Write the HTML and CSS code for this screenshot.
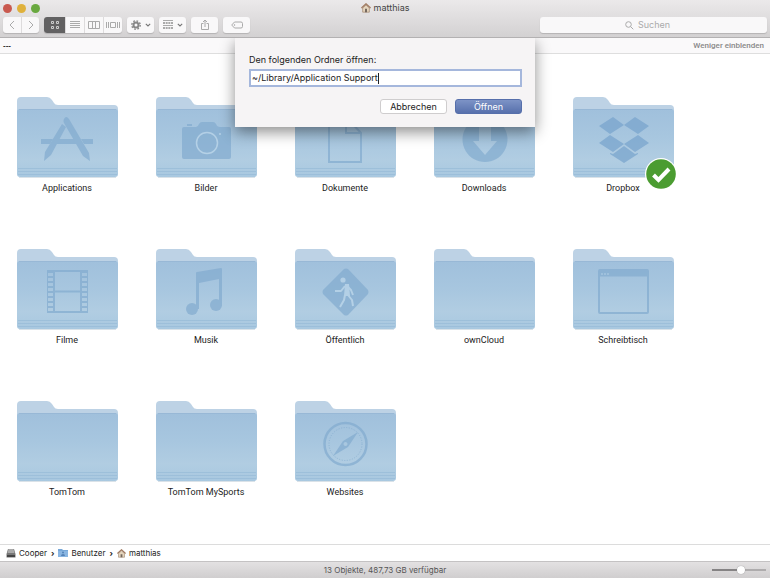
FILE: index.html
```html
<!DOCTYPE html>
<html lang="de">
<head>
<meta charset="utf-8">
<title>matthias</title>
<link rel="stylesheet" href="styles.css">
</head>
<body>
<svg class="defs" aria-hidden="true">
  <defs>
    <linearGradient id="front" x1="0" y1="0" x2="0" y2="1">
      <stop offset="0" stop-color="#a0c0dc"/>
      <stop offset="0.4" stop-color="#a7c6df"/>
      <stop offset="0.75" stop-color="#b1cde2"/>
      <stop offset="1" stop-color="#a8c8e0"/>
    </linearGradient>
    <symbol id="folder" viewBox="0 0 102 82">
      <path d="M0 77V4q0-4 4-4h26q3 0 5 3l2 3q1 2 4 2h56q4 0 4 4v65z" fill="#bdd2e5"/>
      <path d="M0 15q0-3 3-3h95q3 0 3 3v62q0 3-3 3H3q-3 0-3-3z" fill="url(#front)"/>
      <path d="M2 12.500h97" stroke="#98b8d6"/>
      <path d="M1 71.500h99M1 74.500h99M1 77.500h99" stroke="#94b9d7" opacity=".6"/>
      <path d="M2 80.500h97" stroke="#a5b7c6" opacity=".4"/>
    </symbol>
    <symbol id="home" viewBox="0 0 12 12">
      <path d="M2 6v5h8V6L6 2.500z" fill="#e5d5bd" stroke="#94765c" stroke-width=".7"/>
      <path d="M.5 6L6 1l5.500 5" fill="none" stroke="#a07a60" stroke-width="1.600"/>
      <path d="M4.800 7h2.400v4H4.800z" fill="#76695f"/>
    </symbol>
    <symbol id="chevron" viewBox="0 0 6 4"><path d="M.8.8L3 3 5.200.8" fill="none" stroke="#777" stroke-width="1.100"/></symbol>
  </defs>
</svg>
<div class="window">
  <header class="toolbar">
    <div class="titlebar">
      <div class="lights">
        <button class="light red" aria-label="Schließen"></button>
        <button class="light yellow" aria-label="Minimieren"></button>
        <button class="light green" aria-label="Vollbild"></button>
      </div>
      <h1 class="title"><svg width="10" height="10"><use href="#home"/></svg>matthias</h1>
    </div>
    <div class="tools">
      <div class="group nav">
        <button aria-label="Zurück"><svg width="8" height="10" viewBox="0 0 8 10"><path d="M6 1L2 5l4 4"/></svg></button>
        <button aria-label="Vorwärts"><svg width="8" height="10" viewBox="0 0 8 10"><path d="M2 1l4 4-4 4"/></svg></button>
      </div>
      <div class="group views">
        <button class="active" aria-label="Symbole"><svg width="10" height="10" viewBox="0 0 10 10"><path d="M1.500 1.500h2v2h-2zM6.500 1.500h2v2h-2zM1.500 6.500h2v2h-2zM6.500 6.500h2v2h-2z"/></svg></button>
        <button aria-label="Liste"><svg width="10" height="10" viewBox="0 0 10 10"><path d="M0 1.500h10M0 3.500h10M0 5.500h10M0 7.500h10"/></svg></button>
        <button aria-label="Spalten"><svg width="12" height="10" viewBox="0 0 12 10"><path d="M.5 1.500h11v7H.5zM4.500 1v8M7.500 1v8"/></svg></button>
        <button aria-label="Cover Flow"><svg width="14" height="10" viewBox="0 0 14 10"><path d="M4.500 2.500h5v5h-5zM.5 2v6M2.500 2v6M11.500 2v6M13.500 2v6"/></svg></button>
      </div>
      <button class="tool" aria-label="Aktionen">
        <svg width="10" height="10" viewBox="0 0 10 10"><circle class="gear" cx="5" cy="5" r="2.500" stroke-width="2"/><circle class="gear" cx="5" cy="5" r="4.200" stroke-width="1.400" stroke-dasharray="1.700 1.600"/></svg>
        <svg width="6" height="4"><use href="#chevron"/></svg>
      </button>
      <button class="tool" aria-label="Ausrichten">
        <svg width="10" height="10" viewBox="0 0 10 10"><path d="M0 .5h10M0 5.500h10"/><path d="M0 3h10M0 8h10" stroke-width="2" stroke-dasharray="2 .667"/></svg>
        <svg width="6" height="4"><use href="#chevron"/></svg>
      </button>
      <button class="tool" aria-label="Teilen"><svg width="10" height="12" viewBox="0 0 10 12"><path d="M3.500 4.500h-2v6h7v-6h-2M5 8V1M3 3l2-2 2 2"/></svg></button>
      <button class="tool" aria-label="Tags"><svg width="12" height="8" viewBox="0 0 12 8"><path d="M3.500 1H10q1.500 0 1.500 1.500v3Q11.500 7 10 7H3.500L.7 4z"/><circle cx="3.500" cy="4" r=".4"/></svg></button>
      <label class="search">
        <svg width="9" height="9" viewBox="0 0 9 9"><circle cx="3.500" cy="3.500" r="2.800"/><path d="M5.500 5.500L8.300 8.300"/></svg>
        <input type="text" placeholder="Suchen" aria-label="Suchen">
      </label>
    </div>
  </header>

  <div class="strip"><span class="dashes">---</span><button class="less">Weniger einblenden</button></div>

  <form class="sheet" role="dialog">
    <label for="path">Den folgenden Ordner öffnen:</label>
    <div class="field"><input id="path" type="text" value="~/Library/Application Support" size="29"><span class="caret"></span></div>
    <div class="actions"><button type="button">Abbrechen</button><button type="button" class="primary">Öffnen</button></div>
  </form>

  <main class="files">
    <a class="file" href="#"><svg class="icon" viewBox="0 0 102 82"><use href="#folder"/><g class="glyph">
      <path d="M24 42h12l-3 5h-9zM42 42h15l3 5H39zM64 42h12v5h-9z"/>
      <path d="M45 27l4 3-15 28-7 6 1-9zM47 22q2-4 5 0l20 34 1 8-7-5-19-33q-1-2 0-4z"/>
    </g></svg><span>Applications</span></a>
    <a class="file" href="#"><svg class="icon" viewBox="0 0 102 82"><use href="#folder"/><g class="glyph">
      <path d="M28 30h12q2 0 3-3 1-2 3-2h11q2 0 3 2 1 3 4 3h9q2 0 2 2v28q0 2-2 2H28q-2 0-2-2V32q0-2 2-2zM31 29v-2h5v2z"/>
      <circle cx="51" cy="46" r="10.500" fill="none" stroke="#b9d4e9" stroke-width="1.500"/><circle cx="64" cy="37" r="1" fill="#b9d4e9"/>
    </g></svg><span>Bilder</span></a>
    <a class="file" href="#"><svg class="icon" viewBox="0 0 102 82"><use href="#folder"/><g class="line">
      <path d="M34 20h17l15 16v29H34z" stroke-width="2"/><path d="M51 20v16h15" stroke-width="2"/>
    </g></svg><span>Dokumente</span></a>
    <a class="file" href="#"><svg class="icon" viewBox="0 0 102 82"><use href="#folder"/><g class="glyph">
      <path fill-rule="evenodd" d="M51 20a22.500 22.500 0 1 0 .01 0zM45 27h12v17h6L51 58 39 44h6z"/>
    </g></svg><span>Downloads</span></a>
    <a class="file" href="#"><svg class="icon" viewBox="0 0 102 82"><use href="#folder"/><g class="glyph dark">
      <path d="M40 20l11 8-14 9-11-8zM62 20l14 9-11 8-14-9zM37 38l14 9-11 8-14-9zM65 38l11 8-14 9-11-8zM37 56l3 1 11-8 11 8 3-1v1l-14 9-14-9z"/>
    </g></svg><span>Dropbox</span>
      <svg class="badge" viewBox="0 0 32 32" role="img" aria-label="Synchronisiert"><circle cx="16" cy="16" r="16" fill="#fff"/><circle cx="16" cy="16" r="14.800" fill="#4b9c31"/><path d="M8.500 17l5 5L24 11" fill="none" stroke="#fff" stroke-width="4"/></svg></a>
    <a class="file" href="#"><svg class="icon" viewBox="0 0 102 82"><use href="#folder"/><g class="line">
      <path d="M30 22h41M30 63h41M37.500 42.500h26" stroke-width="2"/><path d="M37 21v43M64 21v43" stroke-width="2"/>
      <path d="M30.500 21v43M70.500 21v43"/>
      <path d="M33.500 22v42M67.500 22v42" stroke-width="6" stroke-dasharray="2 3"/>
    </g></svg><span>Filme</span></a>
    <a class="file" href="#"><svg class="icon" viewBox="0 0 102 82"><use href="#folder"/><g class="glyph">
      <path d="M40 24q0-1 1-1l24-4q1 0 1 1v37h-3V30l-20 4v26h-3z"/><circle cx="36" cy="60" r="6"/><circle cx="60" cy="56" r="6"/>
    </g></svg><span>Musik</span></a>
    <a class="file" href="#"><svg class="icon" viewBox="0 0 102 82"><use href="#folder"/><g class="glyph">
      <path d="M49 20q2-1 4 0l20 21q1 2 0 4L53 66q-2 1-4 0L28 45q-1-2 0-4z"/>
      <circle cx="48" cy="31" r="2.600" fill="#b9d4e9"/>
      <path d="M50 37l-4 5-6 0M52 37l4 4 2 5M50 46l-1 5-4 7M53 46l4 5 1 6" fill="none" stroke="#b9d4e9" stroke-width="2" stroke-linejoin="round"/><path d="M50 35h4l1 12h-6z" fill="#b9d4e9"/>
    </g></svg><span>Öffentlich</span></a>
    <a class="file" href="#"><svg class="icon" viewBox="0 0 102 82"><use href="#folder"/></svg><span>ownCloud</span></a>
    <a class="file" href="#"><svg class="icon" viewBox="0 0 102 82"><use href="#folder"/><g class="line">
      <rect x="26" y="21" width="49" height="43" rx="1" stroke-width="2"/><path d="M26 24h49" stroke-width="7"/><path d="M28 25h2M31 25h2M34 25h2" stroke="#b9d4e9"/>
    </g></svg><span>Schreibtisch</span></a>
    <a class="file" href="#"><svg class="icon" viewBox="0 0 102 82"><use href="#folder"/></svg><span>TomTom</span></a>
    <a class="file" href="#"><svg class="icon" viewBox="0 0 102 82"><use href="#folder"/></svg><span>TomTom MySports</span></a>
    <a class="file" href="#"><svg class="icon" viewBox="0 0 102 82"><use href="#folder"/><g class="line">
      <circle cx="50.500" cy="43" r="21" stroke-width="2.500"/><circle cx="50.500" cy="43" r="16.500" stroke-dasharray="1 1.600"/>
      <path class="needle" fill-rule="evenodd" d="M63 31L53 46 38 55l10-15zM50.500 41a2 2 0 1 0 .01 0z"/>
    </g></svg><span>Websites</span></a>
  </main>

  <nav class="crumbs">
    <a href="#"><svg width="10" height="10" viewBox="0 0 10 10"><path d="M2 1h6l1.500 5v3.500H.5V6z" fill="#777"/><path d="M2.500 1h5l1 4h-7z" fill="#aaa"/><path d="M1 7h8v2H1z" fill="#444"/></svg>Cooper</a>
    <span class="sep">›</span>
    <a href="#"><svg width="10" height="10" viewBox="0 0 10 10"><path d="M0 1h4l1 1h5v7H0z" fill="#76a7d8"/><path d="M0 3h10v6H0z" fill="#8ab6e2"/><circle cx="5" cy="4.500" r="1" fill="#5482b8"/><path d="M3 8q0-2 2-2t2 2z" fill="#5482b8"/></svg>Benutzer</a>
    <span class="sep">›</span>
    <a href="#"><svg width="9" height="9"><use href="#home"/></svg>matthias</a>
  </nav>
  <footer class="status"><span>13 Objekte, 487,73 GB verfügbar</span><input type="range" min="0" max="100" value="55" aria-label="Symbolgröße"></footer>
</div>
</body>
</html>
```

FILE: styles.css
```css
* { box-sizing: border-box; }

body {
  margin: 0;
  font: 9px/12px Inter, "Liberation Sans", sans-serif;
  color: #222;
  background: #fff;
}

button, input { font: inherit; color: inherit; margin: 0; padding: 0; border: 0; background: none; }
a { color: inherit; text-decoration: none; }
svg { display: block; flex: none; }
.defs { position: absolute; width: 0; height: 0; }

.window { position: relative; display: flex; flex-direction: column; min-height: 100vh; }

.toolbar {
  height: 38px;
  background: linear-gradient(#ebe9ea, #d3d1d2);
  border-bottom: 1px solid #b3b1b2;
}
.titlebar { display: grid; grid-template-columns: 1fr auto 1fr; align-items: center; height: 16px; padding: 0 3px; }
.lights { display: flex; gap: 5px; }
.light { width: 9px; height: 9px; border-radius: 50%; }
.red { background: #c9594f; }
.yellow { background: #dfb13c; }
.green { background: #69a83f; }
.title { display: flex; align-items: center; gap: 3px; margin: 0; font-size: 9px; font-weight: 400; color: #444; }

.tools { display: flex; align-items: center; gap: 5px; height: 18px; padding: 0 3px; }
.tools svg { fill: none; stroke: #aaa; }
.tools .gear { stroke: #888; }
.group, .tool, .search {
  display: flex;
  height: 16px;
  background: #f9f8f9;
  border-radius: 3px;
  box-shadow: 0 1px 1px #b5b3b4;
}
.group { overflow: hidden; }
.group button { display: flex; align-items: center; justify-content: center; width: 19px; height: 16px; }
.group button + button { border-left: 1px solid #dddbdc; }
.nav button { width: 18px; }
.views .active { width: 21px; background: #626162; }
.views .active svg { stroke: #ccc; }
.tool { align-items: center; justify-content: center; gap: 4px; width: 27px; }
.search { align-items: center; justify-content: center; gap: 4px; width: 227px; margin-left: auto; }
.search input { width: 44px; outline: 0; }
.search input::placeholder { color: #aaa; opacity: 1; }

.strip {
  display: flex;
  align-items: center;
  justify-content: space-between;
  height: 16px;
  padding: 0 6px 0 3px;
  background: #faf9fa;
  border-bottom: 1px solid #dedede;
}
.dashes { font: 700 8px/12px "Liberation Sans", sans-serif; }
.less { font: 500 8px/12px Roboto, sans-serif; color: #888; }

.sheet {
  position: absolute;
  z-index: 2;
  top: 38px;
  left: 50%;
  width: 300px;
  padding: 16px 13px 13px 14px;
  transform: translateX(-50%);
  background: #f6f4f5;
  box-shadow: 0 5px 14px rgba(0, 0, 0, .45);
  clip-path: inset(0 -30px -30px);
}
.sheet label { display: block; margin-bottom: 3px; }
.field {
  display: flex;
  align-items: center;
  height: 18px;
  padding: 0 1px;
  border: 2px solid #a5b7dc;
  background: #fff;
}
.field input { field-sizing: content; outline: 0; }
.caret { width: 1px; height: 11px; background: #222; }
.actions { display: flex; justify-content: flex-end; gap: 8px; margin-top: 12px; }
.actions button {
  width: 67px;
  height: 15px;
  border: 1px solid #cfcdce;
  border-radius: 3px;
  background: #fff;
}
.actions .primary { border-color: #566fab; background: linear-gradient(#7d93c6, #5770ac); color: #fff; }

.files {
  flex: 1;
  display: grid;
  grid-template-columns: repeat(auto-fill, 102px);
  align-content: start;
  gap: 55px 37px;
  padding: 43px 17px 40px;
  font-family: Roboto, "Liberation Sans", sans-serif;
}
.file { position: relative; display: flex; flex-direction: column; align-items: center; gap: 3px; white-space: nowrap; }
.file span { padding-right: 2px; }
.icon { width: 102px; height: 82px; }
.glyph { fill: #82abcf; opacity: .7; }
.dark { fill: #76a2cc; }
.line { fill: none; stroke: #82abcf; opacity: .7; }
.needle { fill: #82abcf; stroke: none; }
.badge { position: absolute; right: -2px; bottom: 4px; width: 32px; height: 32px; }

.crumbs {
  display: flex;
  align-items: center;
  gap: 4px;
  height: 17px;
  padding: 0 6px;
  font-size: 8px;
  border-top: 1px solid #dcdcdc;
}
.crumbs a { display: flex; align-items: center; gap: 3px; }
.sep { font-weight: 700; }

.status {
  display: grid;
  grid-template-columns: 1fr auto 1fr;
  align-items: center;
  height: 17px;
  padding: 0 4px;
  font-size: 8px;
  color: #555;
  background: linear-gradient(#e3e1e2, #d0cecf);
  border-top: 1px solid #c4c2c3;
}
.status span { grid-column: 2; }
.status input { justify-self: end; width: 54px; height: 8px; appearance: none; }
.status input::-webkit-slider-runnable-track { height: 2px; background: linear-gradient(90deg, #858384 55%, #aeacad 55%); }
.status input::-webkit-slider-thumb { appearance: none; width: 8px; height: 8px; margin-top: -3px; border-radius: 50%; background: #fff; box-shadow: 0 0 1px #777; }
```
